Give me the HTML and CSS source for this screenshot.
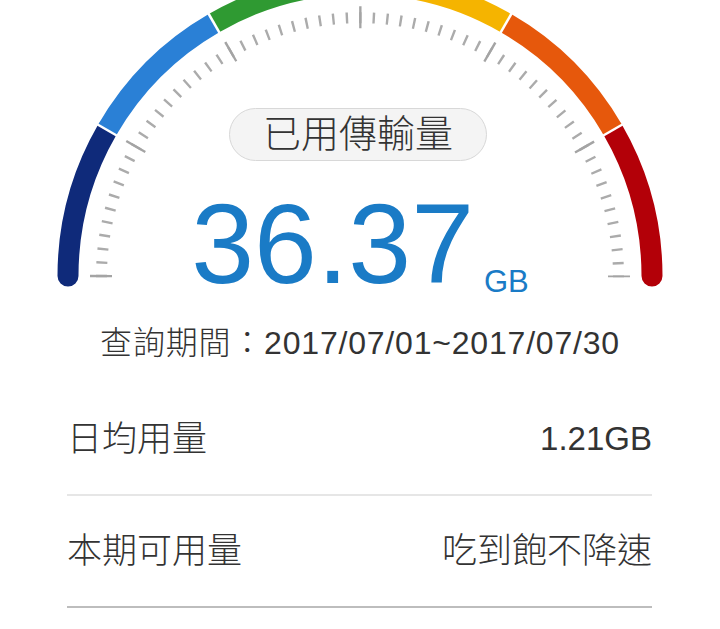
FILE: index.html
```html
<!DOCTYPE html>
<html lang="zh-Hant">
<head>
  <meta charset="UTF-8">
  <title>已用傳輸量</title>
  <link rel="stylesheet" href="styles.css">
</head>
<body>
  <div class="gauge">
    <svg class="gauge-dial" width="720" height="290" viewBox="0 0 720 290">
      <!-- scale ticks: minor every 3deg, major every 30deg -->
      <path class="tick-minor" d="M101.502 277.2 A258.5 258.5 0 1 1 618.498 277.2"/>
      <path class="tick-major" d="M101.002 277.2 A259 259 0 1 1 618.998 277.2"/>

      <!-- coloured band -->
      <path class="band band-end" stroke="#0f2a7a" d="M68 276 A292 292 0 0 1 107.12 130"/>
      <path class="band band-end" stroke="#b30008" d="M612.88 130 A292 292 0 0 1 652 276"/>
      <path class="band" stroke="#2a80d6" d="M107.12 130 A292 292 0 0 1 214 23.12"/>
      <path class="band" stroke="#2f9a32" d="M214 23.12 A292 292 0 0 1 360 -16"/>
      <path class="band" stroke="#f5b400" d="M360 -16 A292 292 0 0 1 506 23.12"/>
      <path class="band" stroke="#e6580c" d="M506 23.12 A292 292 0 0 1 612.88 130"/>

      <!-- gaps between the colours -->
      <line class="band-gap" x1="117.51" y1="136" x2="95" y2="123"/>
      <line class="band-gap" x1="220" y1="33.51" x2="207" y2="11"/>
      <line class="band-gap" x1="360" y1="-4" x2="360" y2="-30"/>
      <line class="band-gap" x1="500" y1="33.51" x2="513" y2="11"/>
      <line class="band-gap" x1="602.49" y1="136" x2="625" y2="123"/>
    </svg>

    <div class="gauge-info">
      <div class="gauge-label">已用傳輸量</div>
      <div class="gauge-value"><span class="num">36.37</span><span class="unit">GB</span></div>
    </div>
  </div>

  <p class="period">查詢期間：2017/07/01~2017/07/30</p>

  <ul class="stats">
    <li class="stat">
      <span class="stat-name">日均用量</span>
      <span class="stat-value stat-num">1.21GB</span>
    </li>
    <li class="stat stat-last">
      <span class="stat-name">本期可用量</span>
      <span class="stat-value">吃到飽不降速</span>
    </li>
  </ul>
</body>
</html>
```

FILE: styles.css
```css
body {
  margin: 0;
  padding: 0;
  background-color: #fff;
  color: #333;
  font-family: "Liberation Sans", "Noto Sans CJK TC", sans-serif;
}

/* gauge: dial and text share one grid cell */
.gauge {
  display: grid;
  height: 290px;
}

.gauge-dial,
.gauge-info {
  grid-area: 1 / 1;
}

.gauge-dial {
  display: block;
}

.tick-minor {
  fill: none;
  stroke: #ababab;
  stroke-width: 11;
  stroke-dasharray: 2.4 11.135;
}

.tick-major {
  fill: none;
  stroke: #a4a4a4;
  stroke-width: 22;
  stroke-dasharray: 2.4 133.212;
}

.band {
  fill: none;
  stroke-width: 21;
}

.band-end {
  stroke-linecap: round;
}

.band-gap {
  stroke: #fff;
  stroke-width: 2.5;
}

.gauge-info {
  display: flex;
  flex-direction: column;
  align-items: center;
  padding-top: 108px;
}

.gauge-label {
  box-sizing: border-box;
  height: 53px;
  padding: 0 33px;
  margin-right: 4px;
  border: 1.5px solid #d8d8d8;
  border-radius: 27px;
  background-color: #f4f4f4;
  font-size: 38px;
  font-weight: 300;
  line-height: 50px;
  color: #333;
}

.gauge-value {
  margin-top: 38px;
  font-size: 113px;
  line-height: 90px;
  color: #1a7bc6;
  white-space: nowrap;
}

.unit {
  margin-left: 10px;
  font-size: 31px;
  line-height: 0;
  vertical-align: -9px;
}

.period {
  margin: 33px 0 0;
  font-size: 32px;
  font-weight: 300;
  line-height: 40px;
  letter-spacing: 0.8px;
  text-align: center;
}

.stats {
  list-style: none;
  margin: 21px 68px 0 67px;
  padding: 0;
}

.stat {
  display: flex;
  justify-content: space-between;
  align-items: center;
  height: 110px;
  border-bottom: 2px solid #e6e6e6;
  line-height: 40px;
  font-weight: 300;
}

.stat-last {
  border-bottom-color: #bdbdbd;
}

.stat-name,
.stat-value {
  font-size: 35px;
}

.stat-num {
  font-size: 33px;
}
```
